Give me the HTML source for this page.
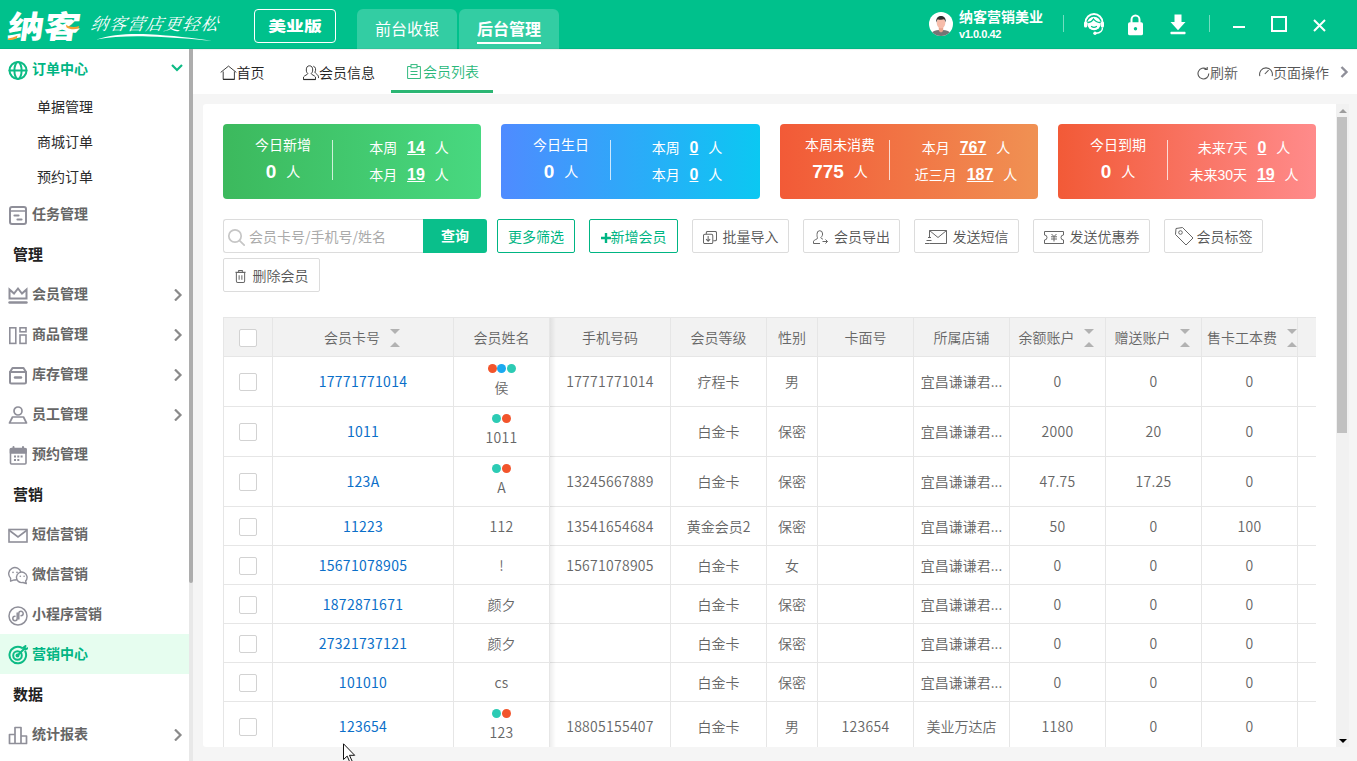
<!DOCTYPE html>
<html lang="zh-CN">
<head>
<meta charset="utf-8">
<title>会员列表</title>
<style>
*{box-sizing:border-box;margin:0;padding:0}
html,body{width:1357px;height:761px;overflow:hidden;background:#f5f5f5}
body{font-family:"Liberation Sans","Noto Sans CJK SC",sans-serif;font-size:14px;color:#333;position:relative}
.abs{position:absolute}
/* ---------- header ---------- */
#hd{position:absolute;left:0;top:0;width:1357px;height:49px;background:#00c18c;color:#fff;box-shadow:inset 0 -1px 0 rgba(0,0,0,.05)}
#logo{position:absolute;left:5px;top:8px;font-family:"Liberation Sans","Noto Sans CJK SC",sans-serif;font-weight:900;font-size:31px;line-height:40px;letter-spacing:0;transform:scaleX(1.17) skewX(-7deg);transform-origin:left bottom;white-space:nowrap}
#slogan{position:absolute;left:91px;top:12px;font-family:"Liberation Serif","Noto Serif CJK SC",serif;font-style:italic;font-size:17px;line-height:26px;letter-spacing:1.3px;font-weight:400;transform:skewX(-10deg);white-space:nowrap}
#ver{position:absolute;left:254px;top:9px;width:82px;height:34px;border:1px solid #fff;border-radius:4px;font-weight:900;font-size:14px;line-height:33px;text-align:center}
#ver span{display:inline-block;transform:scaleX(1.27)}
.htab{position:absolute;top:9px;height:40px;width:100px;background:rgba(255,255,255,.2);border-radius:6px 6px 0 0;font-size:16px;line-height:42px;text-align:center}
.htab.on{font-weight:bold}
.htab.on:after{content:"";position:absolute;left:18px;right:18px;top:33px;height:2px;background:#fff}
#uname{position:absolute;left:959px;top:8px;font-size:14px;font-weight:bold;line-height:18px;white-space:nowrap}
#uver{position:absolute;left:959px;top:26px;font-size:11px;font-weight:bold;line-height:16px;letter-spacing:-.45px}
.vsep{position:absolute;top:15px;width:1px;height:17px;background:rgba(255,255,255,.45)}
/* ---------- sidebar ---------- */
#sb{position:absolute;left:0;top:49px;width:189px;height:712px;background:#fff;overflow:hidden}
#sbscroll{position:absolute;left:189px;top:49px;width:4px;height:712px;background:#e8e8e8}
#sbscroll i{position:absolute;left:0;top:0;width:4px;height:534px;background:#adadad;border-radius:0 0 2px 2px}
.mi{position:absolute;left:0;width:189px;height:40px;line-height:40px;font-size:14px;font-weight:bold;color:#666;padding-left:32px;white-space:nowrap}
.mi svg{position:absolute;left:8px;top:11px}
.mi.sub{font-weight:400;color:#2b2b2b;padding-left:37px;height:35px;line-height:36px}
.mi.grp{padding-left:13px;font-size:15px;color:#222;font-weight:bold;line-height:41px}
.mi.gr{color:#00b583}
.mi.act{background:#e6fdef;color:#00b583}
.mi .arr{position:absolute;left:173px;top:15px}
/* ---------- tabbar ---------- */
#tb{position:absolute;left:193px;top:49px;width:1164px;height:45px;background:#fff;box-shadow:inset 0 2px 1px -1px #f0f0f0}
.pt{position:absolute;top:0;height:45px;line-height:46px;font-size:14px;color:#222;white-space:nowrap;font-weight:350}
.pt svg{vertical-align:-2px}
.pt.on{color:#28b779}
/* ---------- content ---------- */
#card{position:absolute;left:203px;top:104px;width:1133px;height:643px;background:#fff;border-radius:3px 0 0 3px;overflow:hidden}
.stat{position:absolute;top:20px;width:258px;height:75px;border-radius:4px;color:#fff}
.stat .l1{position:absolute;left:0;width:120px;top:11px;text-align:center;font-size:14px;line-height:20px;font-weight:400}
.stat .l2{position:absolute;left:0;width:120px;top:35px;text-align:center;font-size:14px;line-height:26px;white-space:nowrap}
.stat .l2 b{font-size:19px;margin-right:10px;vertical-align:-1px}
.stat .sp{position:absolute;left:109px;top:16px;width:1px;height:40px;background:rgba(255,255,255,.75)}
.stat .r{position:absolute;left:112px;width:148px;text-align:center;font-size:14px;line-height:20px;white-space:nowrap}
.stat .r b{font-size:16px;text-decoration:underline;margin:0 6px 0 6px}
.btn{position:absolute;font-weight:350;height:34px;border:1px solid #dcdcdc;border-radius:2px;background:#fff;font-size:14px;line-height:35px;color:#555;text-align:center;white-space:nowrap}
.btn.g{border-color:#00b583;color:#00b583;font-weight:400}
.btn svg{vertical-align:-2px;margin-right:6px}
/* ---------- table ---------- */
#tbl{position:absolute;left:20px;top:213px;width:1093px;height:430px;border-left:1px solid #e6e6e6;border-top:1px solid #e6e6e6;overflow:hidden}
.tr{position:absolute;left:0;width:1200px;border-bottom:1px solid #e6e6e6}
.tr.h{background:#f2f2f2;color:#666}
.td{position:absolute;top:0;height:100%;border-right:1px solid #e6e6e6;text-align:center;font-size:14px;color:#666;white-space:nowrap;overflow:hidden}
.td span{position:absolute;left:0;right:0;top:50%;margin-top:-10px;line-height:20px}
.td.lnk{color:#0b6fc9}
.tall .td span{margin-top:-11px}
.tall .td span.nm{margin-top:-5px}
.td,.td span{font-family:"Noto Sans CJK SC","Liberation Sans",sans-serif;font-weight:350}
.td span.n{letter-spacing:.28px}
.td.lnk span{font-weight:400}
.cb{position:absolute;left:15px;top:50%;margin-top:-9px;width:18px;height:18px;border:1px solid #d2d2d2;border-radius:2px;background:#fff}
.tr:not(.tall) .cb{margin-top:-8px}
.dots{position:absolute;left:0;right:0;top:7px;height:9px;text-align:center;font-size:0;line-height:9px}
.dots i{display:inline-block;width:9px;height:9px;border-radius:50%;margin:0 .25px}
.so{position:absolute;top:11px;width:10px;height:20px}
.so:before{content:"";position:absolute;left:0;top:0;border:5px solid transparent;border-top-color:#b2b2b2;border-bottom-width:0}
.so:after{content:"";position:absolute;left:0;top:13px;border:5px solid transparent;border-bottom-color:#b2b2b2;border-top-width:0}
/* right scrollbar */
#vs{position:absolute;left:1336px;top:104px;width:13px;height:643px;background:#f1f1f1}
#vs i{position:absolute;left:1px;top:13px;width:10px;height:316px;background:#c1c1c1}
#vs:before{content:"";position:absolute;left:2.500px;top:4.800px;border:4px solid transparent;border-top-width:0;border-bottom:4.500px solid #9d9d9d}
#vs:after{content:"";position:absolute;left:2.500px;top:634.800px;border:4px solid transparent;border-bottom-width:0;border-top:4.700px solid #000}
</style>
</head>
<body>
<div id="hd">
  <div id="logo">纳客</div>
  <div id="slogan">纳客营店更轻松</div>
  <div id="ver"><span>美业版</span></div>
  <div class="htab" style="left:357px">前台收银</div>
  <div class="htab on" style="left:459px">后台管理</div>
  <div id="uname">纳客营销美业</div>
  <div id="uver">v1.0.0.42</div>
  <svg class="abs" style="left:0;top:0" width="230" height="49" viewBox="0 0 230 49" fill="none">
    <path d="M8 38.400c3-.2 6.500-1.200 9.500-2.800l-.6 2.600c-2.800 1.400-6.200 2-9.100 1.800z" fill="#f7a030"/>
    <path d="M66 24.800c3.500 2.400 8.500 3 13.200 1.200l-.8 2.600c-4.600 1.400-9 .7-12-1.400z" fill="#f7a030"/>
    <path d="M96.500 39.600c14-4.800 32-6.300 52-5.300 24 1.200 44 3.700 63.500 6.500-20-1.800-40-3.500-63.500-4.300-20-.6-37 .3-52 3.100z" fill="#fff"/>
  </svg>
  <svg class="abs" style="left:928px;top:11px" width="26" height="26" viewBox="0 0 26 26">
    <defs><clipPath id="avc"><circle cx="13" cy="13" r="12"/></clipPath></defs>
    <circle cx="13" cy="13" r="12" fill="#fff"/>
    <g clip-path="url(#avc)">
      <path d="M2 26c0-5 4-7 11-7s11 2 11 7z" fill="#757575"/>
      <path d="M10.800 16h4.400v4l-2.200 1.500-2.200-1.500z" fill="#eaa58f"/>
      <ellipse cx="13" cy="12" rx="4.300" ry="5.200" fill="#f6bcaa"/>
      <path d="M8.300 11.500c-.6-4 1.500-6.500 4.700-6.500s5.300 2.500 4.700 6.500c-.5-1.600-1.100-2.600-1.700-3.200-1.800.6-4.500.6-6.200-.1-.7.800-1.200 1.800-1.500 3.300z" fill="#2f2f2f"/>
    </g>
  </svg>
  <svg class="abs" style="left:1083px;top:12px" width="22" height="24" viewBox="0 0 22 24" fill="none">
    <path d="M2.500 13.500v-3a8.500 8.500 0 0 1 17 0v3" stroke="#fff" stroke-width="1.800"/>
    <circle cx="11" cy="11.500" r="6.800" fill="#fff"/>
    <path d="M5 10.500c2.500-.3 4.500-1.600 5.500-3.500 1.500 2.200 4 3.400 6.500 3.500" stroke="#00c18c" stroke-width="1.300" stroke-linecap="round"/>
    <path d="M8.500 14.500c1.500 1.100 3.500 1.100 5 0" stroke="#00c18c" stroke-width="1.200" stroke-linecap="round"/>
    <rect x="1" y="9.500" width="3.200" height="6" rx="1.500" fill="#fff"/>
    <rect x="17.800" y="9.500" width="3.200" height="6" rx="1.500" fill="#fff"/>
    <path d="M19.500 15.500c0 3.500-2.500 5.500-6.500 5.800" stroke="#fff" stroke-width="1.400"/>
    <circle cx="12" cy="21.300" r="1.700" fill="#fff"/>
  </svg>
  <svg class="abs" style="left:1127px;top:14px" width="17" height="22" viewBox="0 0 17 21" preserveAspectRatio="none" fill="none">
    <path d="M4.500 9v-3.500a4 4 0 0 1 8 0v3.500" stroke="#fff" stroke-width="2"/>
    <rect x="1" y="7.800" width="15" height="12.500" rx="1.800" fill="#fff"/>
    <circle cx="8.500" cy="14" r="1.700" fill="#00c18c"/>
  </svg>
  <svg class="abs" style="left:1170px;top:14px" width="16" height="21" viewBox="0 0 16 20" preserveAspectRatio="none">
    <path d="M4.500 .500h7v7h4l-7.500 8-7.500-8h4z" fill="#fff"/>
    <rect x=".500" y="17" width="15" height="2.200" rx=".6" fill="#fff"/>
  </svg>
  <div class="abs" style="left:1233px;top:26px;width:12px;height:2px;background:#fff"></div>
  <div class="abs" style="left:1271px;top:16px;width:16px;height:16px;border:2px solid #fff"></div>
  <svg class="abs" style="left:1313px;top:19px" width="13" height="13" viewBox="0 0 13 13" fill="none" stroke="#fff" stroke-width="2"><path d="M1 1l11 11M12 1l-11 11"/></svg>
  <div class="vsep" style="left:1063px"></div>
  <div class="vsep" style="left:1209px"></div>
</div>

<div id="sb">
  <div class="mi gr" style="top:0px"><svg width="20" height="20" viewBox="0 0 20 20" fill="none" stroke-linecap="round" stroke-linejoin="round" ><g stroke="#0dbb85" stroke-width="2"><circle cx="10" cy="10.5" r="8.5"/><ellipse cx="10" cy="10.5" rx="3.6" ry="8.5"/><path d="M1.5 10.5h17"/></g></svg>订单中心<svg class="arr" style="left:171px;top:14px" width="12" height="10" viewBox="0 0 12 10" fill="none" stroke="#0dbb85" stroke-width="2.200"><path d="M1 2l5 5 5-5"/></svg></div>
  <div class="mi sub" style="top:40px">单据管理</div>
  <div class="mi sub" style="top:75px">商城订单</div>
  <div class="mi sub" style="top:110px">预约订单</div>
  <div class="mi" style="top:145px"><svg width="20" height="20" viewBox="0 0 20 20" fill="none" stroke-linecap="round" stroke-linejoin="round" ><g stroke="#8f8f99" stroke-width="2"><rect x="2" y="2" width="16" height="17" rx="2"/><path d="M2 6h16" stroke-width="1.6"/><path d="M6.5 10.5h4M9.5 14.5h4" stroke-width="2.2"/></g></svg>任务管理</div>
  <div class="mi grp" style="top:185px">管理</div>
  <div class="mi" style="top:225px"><svg width="20" height="20" viewBox="0 0 20 20" fill="none" stroke-linecap="round" stroke-linejoin="round" ><g stroke="#8f8f99" stroke-width="2"><path d="M1.5 4.5v9h17v-9l-4.5 4-4-5-4 5z" stroke-linejoin="miter"/><path d="M1.5 17.5h17" stroke-width="2.4"/></g></svg>会员管理<svg class="arr" width="10" height="12" viewBox="0 0 10 12" fill="none" stroke="#8a8a8a" stroke-width="2.2" stroke-linecap="butt"><path d="M2 .500l5.500 5.500-5.500 5.500"/></svg></div>
  <div class="mi" style="top:265px"><svg width="20" height="20" viewBox="0 0 20 20" fill="none" stroke-linecap="round" stroke-linejoin="round" ><g stroke="#8f8f99" stroke-width="1.6" stroke-linejoin="miter"><rect x="1.8" y="2.8" width="6" height="15.6"/><rect x="12" y="2.8" width="6" height="4"/><rect x="12" y="10" width="6" height="8.4"/></g></svg>商品管理<svg class="arr" width="10" height="12" viewBox="0 0 10 12" fill="none" stroke="#8a8a8a" stroke-width="2.2" stroke-linecap="butt"><path d="M2 .500l5.500 5.500-5.500 5.500"/></svg></div>
  <div class="mi" style="top:305px"><svg width="20" height="20" viewBox="0 0 20 20" fill="none" stroke-linecap="round" stroke-linejoin="round" ><g stroke="#8f8f99" stroke-width="2"><path d="M2 7l2.5-4h11l2.500 4v10a1.500 1.500 0 0 1-1.500 1.500h-13a1.500 1.500 0 0 1-1.500-1.500z"/><path d="M2 7h16" /><path d="M7 12.500h6" stroke-width="2.400"/></g></svg>库存管理<svg class="arr" width="10" height="12" viewBox="0 0 10 12" fill="none" stroke="#8a8a8a" stroke-width="2.2" stroke-linecap="butt"><path d="M2 .500l5.500 5.500-5.500 5.500"/></svg></div>
  <div class="mi" style="top:345px"><svg width="20" height="20" viewBox="0 0 20 20" fill="none" stroke-linecap="round" stroke-linejoin="round" ><g stroke="#8f8f99" stroke-width="1.7"><circle cx="10" cy="6" r="4"/><path d="M1.500 18l3-6h11l3 6z"/></g></svg>员工管理<svg class="arr" width="10" height="12" viewBox="0 0 10 12" fill="none" stroke="#8a8a8a" stroke-width="2.2" stroke-linecap="butt"><path d="M2 .500l5.500 5.500-5.500 5.500"/></svg></div>
  <div class="mi" style="top:385px"><svg width="20" height="20" viewBox="0 0 20 20" fill="none" stroke-linecap="round" stroke-linejoin="round" ><g stroke="#8f8f99" stroke-width="1.600"><rect x="2.500" y="3.500" width="15.500" height="15.500" rx="1"/><path d="M2.500 4h15.500v4h-15.500z" fill="#8f8f99"/><path d="M5.500 2v2M15 2v2" stroke-width="2"/></g><g fill="#8f8f99"><rect x="6" y="10.500" width="2" height="2"/><rect x="9.300" y="10.500" width="2" height="2"/><rect x="12.600" y="10.500" width="2" height="2"/><rect x="6" y="14" width="2" height="2"/><rect x="9.300" y="14" width="2" height="2"/></g></svg>预约管理</div>
  <div class="mi grp" style="top:425px">营销</div>
  <div class="mi" style="top:465px"><svg width="20" height="20" viewBox="0 0 20 20" fill="none" stroke-linecap="round" stroke-linejoin="round" ><g stroke="#8f8f99" stroke-width="1.600" stroke-linejoin="miter"><rect x="1" y="4.500" width="18" height="12.500"/><path d="M1.500 5.500l8.500 6.500 8.500-6.500"/></g></svg>短信营销</div>
  <div class="mi" style="top:505px"><svg width="20" height="20" viewBox="0 0 20 20" fill="none" stroke-linecap="round" stroke-linejoin="round" ><g stroke="#8f8f99" stroke-width="1.400"><path d="M2.600 13.200a6.200 6.200 0 1 1 3.600 1.700l-3.600 1.300z"/><path d="M17.600 16a5.300 5.300 0 1 0-2.600 1.500l3.300 1z" fill="#fff"/></g><g fill="#8f8f99"><circle cx="5" cy="7.300" r=".85"/><circle cx="9" cy="7.300" r=".85"/><circle cx="12.300" cy="11.300" r=".8"/><circle cx="16.100" cy="11.300" r=".8"/></g></svg>微信营销</div>
  <div class="mi" style="top:545px"><svg style="top:12px" width="20" height="20" viewBox="0 0 20 20" fill="none" stroke-linecap="round" stroke-linejoin="round" ><g stroke="#8f8f99" stroke-width="1.500"><circle cx="10" cy="10" r="9"/><path d="M10.800 13V7.500a2.200 2.200 0 1 1 2.200 2.200M9.200 7v5.500a2.200 2.200 0 1 1-2.200-2.200"/></g></svg>小程序营销</div>
  <div class="mi act" style="top:585px"><svg width="20" height="20" viewBox="0 0 20 20" fill="none" stroke-linecap="round" stroke-linejoin="round" ><g stroke="#0dbb85" stroke-width="2"><path d="M17.300 6.500a8.300 8.300 0 1 1-3.300-3.600"/><circle cx="9.500" cy="10.500" r="4.300"/><circle cx="9.500" cy="10.500" r="1" fill="#0dbb85"/><path d="M10 10l7-7M15.500 2.500l2-1.500M17.500 4.500l1.800-1.200" /></g></svg>营销中心</div>
  <div class="mi grp" style="top:625px">数据</div>
  <div class="mi" style="top:665px"><svg width="20" height="20" viewBox="0 0 20 20" fill="none" stroke-linecap="round" stroke-linejoin="round" ><g stroke="#8f8f99" stroke-width="1.700"><path d="M1.500 9.500h5.500v9h-5.500zM7 2.500h6v16h-6zM13 11h5.500v7.500h-5.500z" stroke-linejoin="round"/></g></svg>统计报表<svg class="arr" width="10" height="12" viewBox="0 0 10 12" fill="none" stroke="#8a8a8a" stroke-width="2.2" stroke-linecap="butt"><path d="M2 .500l5.500 5.500-5.500 5.500"/></svg></div>
</div>
<div id="sbscroll"><i></i></div>

<div id="tb">
  <div class="pt" style="left:26px;top:1px"><svg width="17" height="16" viewBox="0 0 17 16" style="vertical-align:-2.500px;margin-left:.500px" fill="none" stroke="#2a2a2a" stroke-width=".9"><path d="M.700 7.400l7.800-6.300 7.800 6.300" stroke-linejoin="miter"/><path d="M3.200 6.500v7.900h11.200v-7.900" stroke-linejoin="miter"/><path d="M3.200 14.400h11.200" stroke-width="1.200"/></svg>首页</div>
  <div class="pt" style="left:110px;top:1px"><svg width="16" height="16" viewBox="0 0 16 16" style="vertical-align:-3px" fill="none" stroke="#2a2a2a" stroke-width=".9"><path d="M3.300 5a3.200 4.200 0 1 1 6.400 0c0 1.800-.8 3-1.500 3.600 0 1 3.300 1.800 4.300 3.400v2.500h-12v-2.500c1-1.600 4.300-2.400 4.300-3.400-.7-.6-1.500-1.800-1.500-3.600z"/><path d="M.500 14.500h12" stroke-width="1.200"/><path d="M10.300 1.200c2.400.6 3 3.600 1.600 6 .4 1.200 2.300 1.800 3.300 3.600.3.600.4 1.500.4 2.300"/></svg>会员信息</div>
  <div class="pt on" style="left:214px"><svg width="14" height="15" viewBox="0 0 14 15" fill="none" stroke="#28b779" stroke-width=".95"><path d="M4 2.500h-3.400v12h12.800v-12h-3.400"/><rect x="4" y=".600" width="6" height="3.200"/><path d="M3.500 7.500h7M3.500 10.500h7"/></svg><span style="margin-left:2px">会员列表</span></div>
  <div class="abs" style="left:198px;top:41px;width:102px;height:3px;background:#2bb673"></div>
  <div class="pt" style="left:1004px;top:1px;color:#555"><svg width="13" height="13" viewBox="0 0 13 13" fill="none" stroke="#555" stroke-width="1.100"><path d="M11.800 6.500a5.400 5.400 0 1 1-2.200-4.300"/><path d="M7.500 2.500h2.700v-2.500" stroke-linejoin="miter"/></svg>刷新</div>
  <div class="pt" style="left:1066px;top:1px;color:#555"><svg width="14" height="11" viewBox="0 0 14 11" style="vertical-align:1px" fill="none" stroke="#555" stroke-width="1.050"><path d="M.900 10.200a6.400 6.400 0 1 1 12.200 0"/><path d="M5.800 8l3.800-3.800"/></svg>页面操作</div>
  <div class="abs" style="left:1147px;top:17px;line-height:0"><svg width="9" height="12" viewBox="0 0 9 12" fill="none" stroke="#8f8f99" stroke-width="2.400"><path d="M1.500 1l5 5-5 5"/></svg></div>
</div>

<div id="card">
  <div class="stat" style="left:20px;width:258px;background:linear-gradient(90deg,#3cb95d,#48d880)">
    <div class="l1">今日新增</div><div class="l2"><b>0</b>人</div><div class="sp"></div>
    <div class="r" style="top:14px">本周 <b>14</b> 人</div><div class="r" style="top:41px">本月 <b>19</b> 人</div>
  </div>
  <div class="stat" style="left:298px;width:259px;background:linear-gradient(90deg,#4f8bff,#0bc8f2)">
    <div class="l1">今日生日</div><div class="l2"><b>0</b>人</div><div class="sp"></div>
    <div class="r" style="top:14px">本周 <b>0</b> 人</div><div class="r" style="top:41px">本月 <b>0</b> 人</div>
  </div>
  <div class="stat" style="left:577px;width:258px;background:linear-gradient(90deg,#f25a37,#f09153)">
    <div class="l1">本周未消费</div><div class="l2"><b>775</b>人</div><div class="sp"></div>
    <div class="r" style="top:14px">本月 <b>767</b> 人</div><div class="r" style="top:41px">近三月 <b>187</b> 人</div>
  </div>
  <div class="stat" style="left:855px;width:258px;background:linear-gradient(90deg,#f25a37,#ff8b8b)">
    <div class="l1">今日到期</div><div class="l2"><b>0</b>人</div><div class="sp"></div>
    <div class="r" style="top:14px">未来7天 <b>0</b> 人</div><div class="r" style="top:41px">未来30天 <b>19</b> 人</div>
  </div>
  <div class="abs" style="left:20px;top:115px;width:201px;height:34px;border:1px solid #dcdcdc;border-right:0;border-radius:3px 0 0 3px;font-size:14px;line-height:32px;color:#aaa;padding-left:25px;white-space:nowrap;font-family:'Noto Sans CJK SC','Liberation Sans',sans-serif"><svg style="position:absolute;left:3px;top:8px" width="19" height="19" viewBox="0 0 19 19" fill="none" stroke="#c6c6c6" stroke-width="1.700" stroke-linecap="round"><circle cx="8" cy="8" r="6.200"/><path d="M12.600 12.600l4.600 4.600"/></svg>会员卡号/手机号/姓名</div>
  <div class="abs" style="left:220px;top:115px;width:64px;height:34px;background:#0abf8b;border-radius:0 3px 3px 0;color:#fff;font-weight:bold;font-size:14px;line-height:34px;text-align:center">查询</div>
  <div class="btn g" style="left:294px;top:115px;width:78px">更多筛选</div>
  <div class="btn g" style="left:386px;top:115px;width:89px"><svg width="10" height="10" viewBox="0 0 10 10" style="vertical-align:-0.500px;margin-right:0"><path d="M3.800 0h2.400v3.800h3.800v2.400h-3.800v3.800h-2.400v-3.800h-3.800v-2.400h3.800z" fill="#00b583"/></svg>新增会员</div>
  <div class="btn" style="left:489px;top:115px;width:97px"><svg width="14" height="13" viewBox="0 0 15 14" fill="none" stroke="#666" stroke-width="1.1"><rect x=".500" y="3.500" width="10" height="10" rx="1.500"/><path d="M3.500 3.500v-1.500a1.500 1.500 0 0 1 1.500-1.500h8a1.500 1.500 0 0 1 1.500 1.500v7a1.500 1.500 0 0 1-1.500 1.500h-2"/><path d="M5.500 5.500v5.500M3.300 8.800l2.200 2.200 2.200-2.200"/></svg>批量导入</div>
  <div class="btn" style="left:600px;top:115px;width:97px"><svg width="15" height="14" viewBox="0 0 15 14" fill="none" stroke="#666" stroke-width="1"><path d="M4 4a2.800 3.300 0 1 1 5.600 0c0 2-1.300 3-1.800 3.600 0 .8 1.200 1.200 2.200 1.600M7 13.500h-6.500v-2.300c.5-1.500 4.200-2 4.200-3.200-.5-.6-.7-1.800-.7-3.800"/><path d="M9.500 11.500h5M12.500 9.500l2 2-2 2"/></svg>会员导出</div>
  <div class="btn" style="left:711px;top:115px;width:105px"><svg width="22" height="14" viewBox="0 0 22 14" fill="none" stroke="#666" stroke-width="1"><path d="M4.500 7.500v-7h17v13h-17"/><path d="M4.500 .500l8.500 7 8.500-7"/><path d="M1.500 10.500h5M0 13.500h4.500M3 7.500h3"/></svg>发送短信</div>
  <div class="btn" style="left:830px;top:115px;width:117px"><svg width="20" height="13" viewBox="0 0 20 13" fill="none" stroke="#666" stroke-width="1"><path d="M.500 .500h19v3.500a2.500 2.500 0 0 0 0 5v3.500h-19v-3.500a2.500 2.500 0 0 0 0-5z"/><path d="M7.500 3l2.500 2.500 2.500-2.500M7 5.800h6M7 8h6M10 5.800v4.700"/></svg>发送优惠券</div>
  <div class="btn" style="left:961px;top:115px;width:99px"><svg width="19" height="19" viewBox="0 0 19 19" style="margin-right:3px;vertical-align:-4px" fill="none" stroke="#666" stroke-width="1"><path d="M1 1.500l6.500-1 10.500 10.500-7 7-10.500-10.500z" stroke-linejoin="round"/><circle cx="5.500" cy="5.500" r="1.800"/></svg>会员标签</div>
  <div class="btn" style="left:20px;top:154px;width:97px"><svg width="11" height="13" viewBox="0 0 12 14" style="margin-right:7px;vertical-align:-1.5px" fill="none" stroke="#666" stroke-width="1.1"><path d="M.500 2.500h11M4 2.500v-2h4v2M1.500 2.500v9.500a1.500 1.500 0 0 0 1.500 1.500h6a1.500 1.500 0 0 0 1.500-1.500v-9.500M4.500 5.500v5M7.500 5.500v5"/></svg>删除会员</div>
  <div id="tbl">
   <div class="tr h" style="top:0;height:39px"><div class="td" style="left:0px;width:49px"><i class="cb"></i></div><div class="td" style="left:49px;width:181px"><span style="right:22px">会员卡号</span><i class="so" style="left:117px"></i></div><div class="td" style="left:230px;width:96px"><span>会员姓名</span></div><div class="td" style="left:326px;width:121px"><span>手机号码</span></div><div class="td" style="left:447px;width:96px"><span>会员等级</span></div><div class="td" style="left:543px;width:51px"><span>性别</span></div><div class="td" style="left:594px;width:96px"><span>卡面号</span></div><div class="td" style="left:690px;width:96px"><span>所属店铺</span></div><div class="td" style="left:786px;width:96px"><span style="right:22px">余额账户</span><i class="so" style="left:74px"></i></div><div class="td" style="left:882px;width:96px"><span style="right:22px">赠送账户</span><i class="so" style="left:74px"></i></div><div class="td" style="left:978px;width:96px"><span style="right:15px">售卡工本费</span><i class="so" style="left:85px"></i></div><div class="td" style="left:1074px;width:96px"><span></span></div></div>
   <div class="tr tall" style="top:39px;height:50px"><div class="td" style="left:0px;width:49px"><i class="cb"></i></div><div class="td lnk" style="left:49px;width:181px"><span class="n">17771771014</span></div><div class="td" style="left:230px;width:96px"><div class="dots"><i style="background:#f2552c"></i><i style="background:#1aa9f0"></i><i style="background:#2ccbb4"></i></div><span class="nm">侯</span></div><div class="td" style="left:326px;width:121px"><span class="n">17771771014</span></div><div class="td" style="left:447px;width:96px"><span>疗程卡</span></div><div class="td" style="left:543px;width:51px"><span>男</span></div><div class="td" style="left:594px;width:96px"></div><div class="td" style="left:690px;width:96px"><span>宜昌谦谦君...</span></div><div class="td" style="left:786px;width:96px"><span class="n">0</span></div><div class="td" style="left:882px;width:96px"><span class="n">0</span></div><div class="td" style="left:978px;width:96px"><span class="n">0</span></div><div class="td" style="left:1074px;width:96px"></div></div>
   <div class="tr tall" style="top:89px;height:50px"><div class="td" style="left:0px;width:49px"><i class="cb"></i></div><div class="td lnk" style="left:49px;width:181px"><span class="n">1011</span></div><div class="td" style="left:230px;width:96px"><div class="dots"><i style="background:#2ccbb4"></i><i style="background:#f2552c"></i></div><span class="nm n">1011</span></div><div class="td" style="left:326px;width:121px"></div><div class="td" style="left:447px;width:96px"><span>白金卡</span></div><div class="td" style="left:543px;width:51px"><span>保密</span></div><div class="td" style="left:594px;width:96px"></div><div class="td" style="left:690px;width:96px"><span>宜昌谦谦君...</span></div><div class="td" style="left:786px;width:96px"><span class="n">2000</span></div><div class="td" style="left:882px;width:96px"><span class="n">20</span></div><div class="td" style="left:978px;width:96px"><span class="n">0</span></div><div class="td" style="left:1074px;width:96px"></div></div>
   <div class="tr tall" style="top:139px;height:50px"><div class="td" style="left:0px;width:49px"><i class="cb"></i></div><div class="td lnk" style="left:49px;width:181px"><span class="n">123A</span></div><div class="td" style="left:230px;width:96px"><div class="dots"><i style="background:#2ccbb4"></i><i style="background:#f2552c"></i></div><span class="nm n">A</span></div><div class="td" style="left:326px;width:121px"><span class="n">13245667889</span></div><div class="td" style="left:447px;width:96px"><span>白金卡</span></div><div class="td" style="left:543px;width:51px"><span>保密</span></div><div class="td" style="left:594px;width:96px"></div><div class="td" style="left:690px;width:96px"><span>宜昌谦谦君...</span></div><div class="td" style="left:786px;width:96px"><span class="n">47.75</span></div><div class="td" style="left:882px;width:96px"><span class="n">17.25</span></div><div class="td" style="left:978px;width:96px"><span class="n">0</span></div><div class="td" style="left:1074px;width:96px"></div></div>
   <div class="tr" style="top:189px;height:39px"><div class="td" style="left:0px;width:49px"><i class="cb"></i></div><div class="td lnk" style="left:49px;width:181px"><span class="n">11223</span></div><div class="td" style="left:230px;width:96px"><span class="n">112</span></div><div class="td" style="left:326px;width:121px"><span class="n">13541654684</span></div><div class="td" style="left:447px;width:96px"><span>黄金会员2</span></div><div class="td" style="left:543px;width:51px"><span>保密</span></div><div class="td" style="left:594px;width:96px"></div><div class="td" style="left:690px;width:96px"><span>宜昌谦谦君...</span></div><div class="td" style="left:786px;width:96px"><span class="n">50</span></div><div class="td" style="left:882px;width:96px"><span class="n">0</span></div><div class="td" style="left:978px;width:96px"><span class="n">100</span></div><div class="td" style="left:1074px;width:96px"></div></div>
   <div class="tr" style="top:228px;height:39px"><div class="td" style="left:0px;width:49px"><i class="cb"></i></div><div class="td lnk" style="left:49px;width:181px"><span class="n">15671078905</span></div><div class="td" style="left:230px;width:96px"><span class="n">!</span></div><div class="td" style="left:326px;width:121px"><span class="n">15671078905</span></div><div class="td" style="left:447px;width:96px"><span>白金卡</span></div><div class="td" style="left:543px;width:51px"><span>女</span></div><div class="td" style="left:594px;width:96px"></div><div class="td" style="left:690px;width:96px"><span>宜昌谦谦君...</span></div><div class="td" style="left:786px;width:96px"><span class="n">0</span></div><div class="td" style="left:882px;width:96px"><span class="n">0</span></div><div class="td" style="left:978px;width:96px"><span class="n">0</span></div><div class="td" style="left:1074px;width:96px"></div></div>
   <div class="tr" style="top:267px;height:39px"><div class="td" style="left:0px;width:49px"><i class="cb"></i></div><div class="td lnk" style="left:49px;width:181px"><span class="n">1872871671</span></div><div class="td" style="left:230px;width:96px"><span>颜夕</span></div><div class="td" style="left:326px;width:121px"></div><div class="td" style="left:447px;width:96px"><span>白金卡</span></div><div class="td" style="left:543px;width:51px"><span>保密</span></div><div class="td" style="left:594px;width:96px"></div><div class="td" style="left:690px;width:96px"><span>宜昌谦谦君...</span></div><div class="td" style="left:786px;width:96px"><span class="n">0</span></div><div class="td" style="left:882px;width:96px"><span class="n">0</span></div><div class="td" style="left:978px;width:96px"><span class="n">0</span></div><div class="td" style="left:1074px;width:96px"></div></div>
   <div class="tr" style="top:306px;height:39px"><div class="td" style="left:0px;width:49px"><i class="cb"></i></div><div class="td lnk" style="left:49px;width:181px"><span class="n">27321737121</span></div><div class="td" style="left:230px;width:96px"><span>颜夕</span></div><div class="td" style="left:326px;width:121px"></div><div class="td" style="left:447px;width:96px"><span>白金卡</span></div><div class="td" style="left:543px;width:51px"><span>保密</span></div><div class="td" style="left:594px;width:96px"></div><div class="td" style="left:690px;width:96px"><span>宜昌谦谦君...</span></div><div class="td" style="left:786px;width:96px"><span class="n">0</span></div><div class="td" style="left:882px;width:96px"><span class="n">0</span></div><div class="td" style="left:978px;width:96px"><span class="n">0</span></div><div class="td" style="left:1074px;width:96px"></div></div>
   <div class="tr" style="top:345px;height:39px"><div class="td" style="left:0px;width:49px"><i class="cb"></i></div><div class="td lnk" style="left:49px;width:181px"><span class="n">101010</span></div><div class="td" style="left:230px;width:96px"><span class="n">cs</span></div><div class="td" style="left:326px;width:121px"></div><div class="td" style="left:447px;width:96px"><span>白金卡</span></div><div class="td" style="left:543px;width:51px"><span>保密</span></div><div class="td" style="left:594px;width:96px"></div><div class="td" style="left:690px;width:96px"><span>宜昌谦谦君...</span></div><div class="td" style="left:786px;width:96px"><span class="n">0</span></div><div class="td" style="left:882px;width:96px"><span class="n">0</span></div><div class="td" style="left:978px;width:96px"><span class="n">0</span></div><div class="td" style="left:1074px;width:96px"></div></div>
   <div class="tr tall" style="top:384px;height:50px"><div class="td" style="left:0px;width:49px"><i class="cb"></i></div><div class="td lnk" style="left:49px;width:181px"><span class="n">123654</span></div><div class="td" style="left:230px;width:96px"><div class="dots"><i style="background:#2ccbb4"></i><i style="background:#f2552c"></i></div><span class="nm n">123</span></div><div class="td" style="left:326px;width:121px"><span class="n">18805155407</span></div><div class="td" style="left:447px;width:96px"><span>白金卡</span></div><div class="td" style="left:543px;width:51px"><span>男</span></div><div class="td" style="left:594px;width:96px"><span class="n">123654</span></div><div class="td" style="left:690px;width:96px"><span>美业万达店</span></div><div class="td" style="left:786px;width:96px"><span class="n">1180</span></div><div class="td" style="left:882px;width:96px"><span class="n">0</span></div><div class="td" style="left:978px;width:96px"><span class="n">0</span></div><div class="td" style="left:1074px;width:96px"></div></div>
   <div class="abs" style="left:326px;top:0;width:6px;height:440px;background:linear-gradient(90deg,rgba(0,0,0,.07),rgba(0,0,0,0))"></div>
  </div>
</div>
<div id="vs"><i></i></div>
<svg class="abs" style="left:340px;top:740px" width="20" height="21" viewBox="340 740 20 21"><path d="M343.500 743.800v15.700l3.700-3.400 2.700 6.200 2.300-1-2.700-6h5.200z" fill="#fff" stroke="#111" stroke-width="1" stroke-linejoin="miter"/></svg>

</body>
</html>
